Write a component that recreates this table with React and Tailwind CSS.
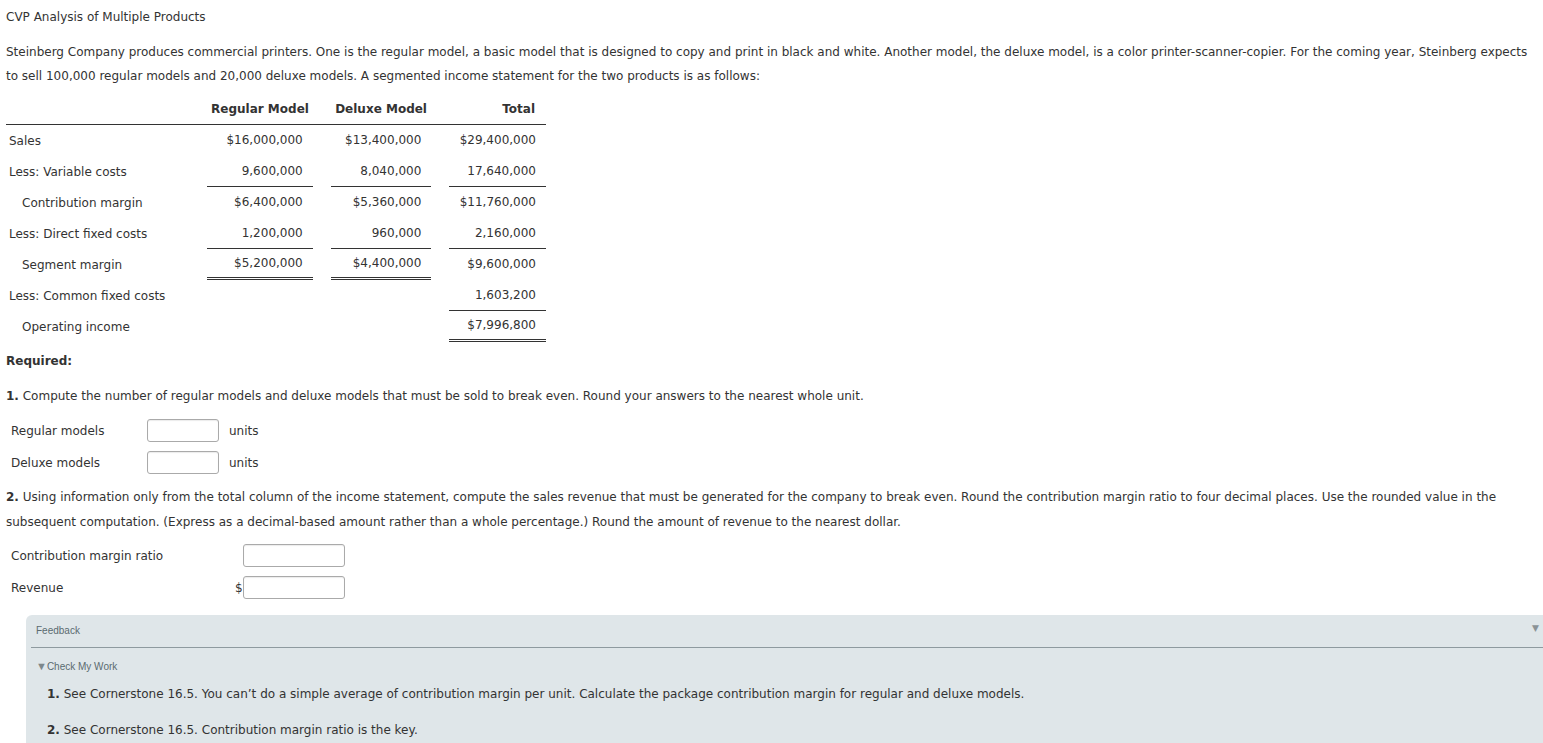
const rows = [
    { label: 'Sales', indent: false, vals: ['$16,000,000', '$13,400,000', '$29,400,000'], line: [0, 0, 0] },
    { label: 'Less: Variable costs', indent: false, vals: ['9,600,000', '8,040,000', '17,640,000'], line: [1, 1, 1] },
    { label: 'Contribution margin', indent: true, vals: ['$6,400,000', '$5,360,000', '$11,760,000'], line: [0, 0, 0] },
    { label: 'Less: Direct fixed costs', indent: false, vals: ['1,200,000', '960,000', '2,160,000'], line: [1, 1, 1] },
    { label: 'Segment margin', indent: true, vals: ['$5,200,000', '$4,400,000', '$9,600,000'], line: [2, 2, 0] },
    { label: 'Less: Common fixed costs', indent: false, vals: ['', '', '1,603,200'], line: [0, 0, 1] },
    { label: 'Operating income', indent: true, vals: ['', '', '$7,996,800'], line: [0, 0, 2] },
];

const colW = ['w-[202px]', 'w-[106px]', 'w-[101px]', 'w-[97px]'];

function Cell({ value, line, w, last }) {
    const border = line === 1 ? 'border-b border-[#333]' : line === 2 ? 'border-b-[3px] border-double border-[#333]' : 'border-b border-transparent';
    return (
        <div className={`${w} ${last ? '' : 'mr-[18px]'} h-[31px] flex items-center justify-end pr-[10px] ${border}`}>
            {value}
        </div>
    );
}

function Box({ w = 'w-[72px]' }) {
    return <div className={`${w} h-[23px] border border-[#aaa] rounded-[3px] bg-white shadow-[inset_0_1px_1px_rgba(0,0,0,0.08)]`} />;
}

export default function App() {
    return (
        <div className="min-h-screen bg-white text-[#333] text-[12px] px-[6px]" style={{ fontFamily: '"DejaVu Sans", Verdana, sans-serif' }}>
            <div className="pt-[9px] leading-[16px]">CVP Analysis of Multiple Products</div>

            <p className="mt-[15px] leading-[24px] pr-[2px]">
                Steinberg Company produces commercial printers. One is the regular model, a basic model that is designed to copy and print in black and white. Another model, the deluxe model, is a color printer-scanner-copier. For the coming year, Steinberg expects to sell 100,000 regular models and 20,000 deluxe models. A segmented income statement for the two products is as follows:
            </p>

            {/* --- Income statement --- */}
            <div className="mt-[9px] w-[540px]">
                <div className="flex h-[28px] items-start pt-[3px] font-bold border-b border-[#333]">
                    <div className="w-[202px]" />
                    <div className="w-[106px] mr-[18px] text-center">Regular Model</div>
                    <div className="w-[101px] mr-[18px] text-center">Deluxe Model</div>
                    <div className="w-[97px] text-right pr-[11px]">Total</div>
                </div>
                {rows.map((r) => (
                    <div key={r.label} className="flex">
                        <div className={`${colW[0]} h-[31px] flex items-center ${r.indent ? 'pl-[16px]' : 'pl-[3px]'}`}>{r.label}</div>
                        {r.vals.map((v, i) => (
                            <Cell key={i} value={v} line={r.line[i]} w={colW[i + 1]} last={i === 2} />
                        ))}
                    </div>
                ))}
            </div>

            <div className="mt-[10px] font-bold">Required:</div>

            <p className="mt-[17px]"><b>1.</b> Compute the number of regular models and deluxe models that must be sold to break even. Round your answers to the nearest whole unit.</p>

            <div className="mt-[14px] pl-[5px] flex flex-col gap-[9px]">
                <div className="flex items-center">
                    <div className="w-[136px]">Regular models</div>
                    <Box />
                    <span className="ml-[10px]">units</span>
                </div>
                <div className="flex items-center">
                    <div className="w-[136px]">Deluxe models</div>
                    <Box />
                    <span className="ml-[10px]">units</span>
                </div>
            </div>

            <p className="mt-[11px] leading-[25px]">
                <b>2.</b> Using information only from the total column of the income statement, compute the sales revenue that must be generated for the company to break even. Round the contribution margin ratio to four decimal places. Use the rounded value in the subsequent computation. (Express as a decimal-based amount rather than a whole percentage.) Round the amount of revenue to the nearest dollar.
            </p>

            <div className="mt-[9px] pl-[5px] flex flex-col gap-[9px]">
                <div className="flex items-center">
                    <div className="w-[224px]">Contribution margin ratio</div>
                    <div className="w-[8px]" />
                    <Box w="w-[102px]" />
                </div>
                <div className="flex items-center">
                    <div className="w-[224px]">Revenue</div>
                    <div className="w-[8px]">$</div>
                    <Box w="w-[102px]" />
                </div>
            </div>

            {/* --- Feedback --- */}
            <div className="mt-[16px] ml-[20px] -mr-[6px] bg-[#dfe6e9] rounded-tl-[6px] pb-[20px]">
                <div className="flex items-center justify-between ml-[5px] pl-[5px] pr-[4px] pt-[8px] pb-[9px] border-b border-[#8e9a9f]">
                    <span className="text-[10px] text-[#5b6b70]" style={{ fontFamily: '"Liberation Sans", Arial, sans-serif' }}>Feedback</span>
                    <span className="text-[9px] text-[#8a9296] -mt-[4px]">▼</span>
                </div>
                <div className="pl-[10px] pt-[11px] text-[10px] text-[#5b6b70] flex items-center" style={{ fontFamily: '"Liberation Sans", Arial, sans-serif' }}>
                    <span className="text-[11px] text-[#7d878b] leading-none">▼</span>Check My Work
                </div>
                <p className="pl-[21px] mt-[11px]"><b>1.</b> See Cornerstone 16.5. You can’t do a simple average of contribution margin per unit. Calculate the package contribution margin for regular and deluxe models.</p>
                <p className="pl-[21px] mt-[18px]"><b>2.</b> See Cornerstone 16.5. Contribution margin ratio is the key.</p>
            </div>
        </div>
    );
}
